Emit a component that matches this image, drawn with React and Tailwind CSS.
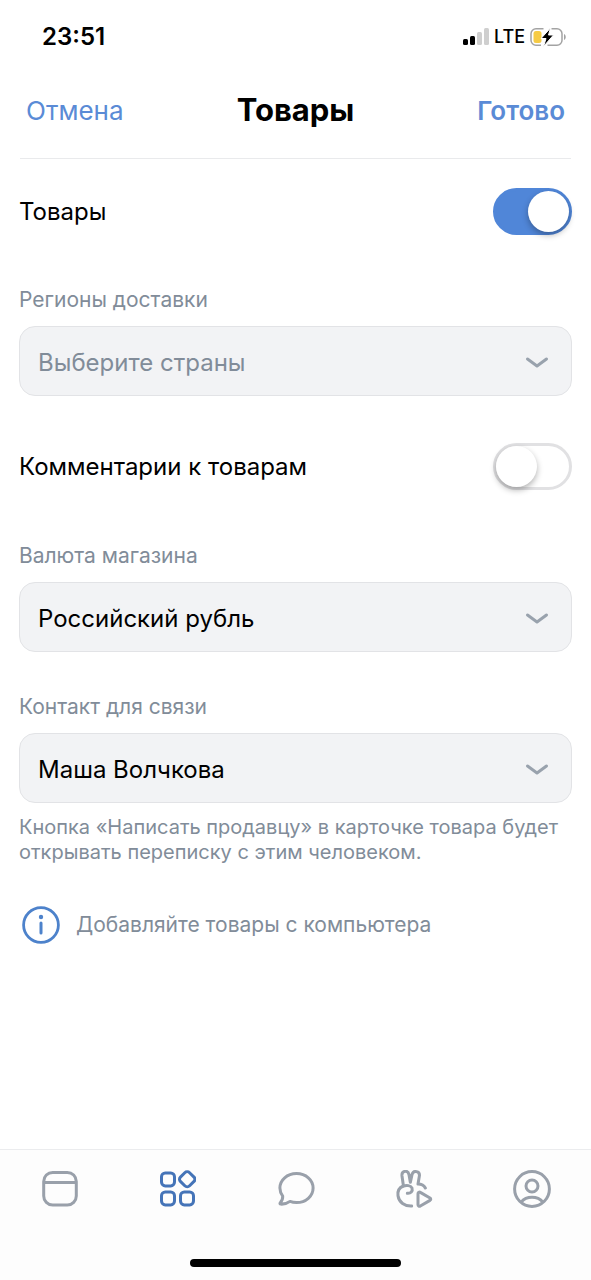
import { useState } from 'react';

const tabs = [
  { id: 'feed', label: 'Новости', Icon: FeedIcon },
  { id: 'services', label: 'Сервисы', Icon: ServicesIcon },
  { id: 'messages', label: 'Сообщения', Icon: MessagesIcon },
  { id: 'clips', label: 'Клипы', Icon: ClipsIcon },
  { id: 'profile', label: 'Профиль', Icon: ProfileIcon },
];

function FeedIcon() {
  return (
    <svg width="38" height="38" viewBox="0 0 38 38" fill="none" stroke="currentColor" strokeWidth="3">
      <rect x="3.7" y="2.4" width="32.6" height="32.6" rx="9" />
      <path d="M3.7 12.6h32.6" />
    </svg>
  );
}

function ServicesIcon() {
  return (
    <svg width="38" height="38" viewBox="-1 0 38 38" fill="none" stroke="currentColor" strokeWidth="3">
      <rect x="2.5" y="2.9" width="13" height="13" rx="3.8" />
      <rect x="2.5" y="21.9" width="13" height="13" rx="3.8" />
      <rect x="21.5" y="21.9" width="13" height="13" rx="3.8" />
      <path d="M25.8 2.7a3.4 3.4 0 0 1 4.800 0l4.400 4.400a3 3 0 0 1 0 4.300l-4.400 4.400a3.400 3.400 0 0 1-4.800 0l-4.400-4.400a3 3 0 0 1 0-4.300z" />
    </svg>
  );
}

function MessagesIcon() {
  return (
    <svg width="38" height="38" viewBox="0 0 38 38" fill="none" stroke="currentColor" strokeWidth="3" strokeLinejoin="round">
      <path d="M19.5 3.6c9.4 0 16.6 6.3 16.6 14.4s-7.2 14.6-16.6 14.6c-2.3 0-4.5-.4-6.5-1.2-2.4 1.8-5.6 2.9-9.3 2.7-.7 0-1-.8-.5-1.3 1.8-1.9 2.7-4.2 2.5-6.7A13.5 13.5 0 0 1 2.9 18C2.9 9.9 10.1 3.6 19.5 3.6z" />
    </svg>
  );
}

function ClipsIcon() {
  return (
    <svg width="38" height="38" viewBox="32 42 114 114" fill="none" stroke="currentColor" strokeWidth="9" strokeLinecap="round" strokeLinejoin="round">
      <path d="M57 88 53 60c-2-17 18-19 21-4l4 23 5-23c4-15 25-11 22 5l-4 23c11 0 18 4 22 12" />
      <path d="M57 90c-12 5-18 15-16 29 3 20 20 32 41 31" />
      <path d="M57 90c9-3 23-2 26 6 3 10-4 17-14 16" />
      <path d="M101 113v33c0 4 4 6 7 4l29-17c3-2 3-5 0-7l-29-17c-3-2-7 0-7 4z" />
    </svg>
  );
}

function ProfileIcon() {
  return (
    <svg width="38" height="38" viewBox="0 0 38 38" fill="none" stroke="currentColor" strokeWidth="3">
      <circle cx="19" cy="19" r="17.4" />
      <circle cx="19" cy="16" r="6" />
      <path d="M8 32.2c2.8-3.3 6.5-4.900 11-4.900s8.200 1.600 11 4.900" />
    </svg>
  );
}

function StatusBar() {
  return (
    <div className="flex h-[74px] items-center justify-between pr-[22px] pl-[42px]">
      <span className="text-2xl font-semibold">23:51</span>
      <div className="flex items-center gap-1">
        <svg width="28" height="20" viewBox="0 0 28 20">
          <rect x="1" y="12" width="5" height="6" rx="1.5" />
          <rect x="8" y="9" width="5" height="9" rx="1.5" />
          <rect x="15" y="5" width="5" height="13" rx="1.5" fill="#cfcfcf" />
          <rect x="22" y="1" width="5" height="17" rx="1.5" fill="#cfcfcf" />
        </svg>
        <span className="text-lg font-medium">LTE</span>
        <svg width="40" height="20" viewBox="1.5 0 40 20">
          <path d="M16 1.7H8.500a5 5 0 0 0-5 5v6.600a5 5 0 0 0 5 5h5M24 1.700h5.500a5 5 0 0 1 5 5v6.600a5 5 0 0 1-5 5H20" fill="none" stroke="#a3a3a3" strokeWidth="1.500" />
          <path d="M36.500 7c2.300 1 2.300 5 0 6z" fill="#a3a3a3" />
          <rect x="6" y="4" width="8" height="12" rx="2.500" fill="#f6cb45" />
          <path d="M23 1 13.500 11.500h5l-2.500 8 10-11.500h-5z" stroke="#fff" strokeWidth="1" />
        </svg>
      </div>
    </div>
  );
}

function Toggle({ id, label, checked, onChange }) {
  return (
    <div className="flex items-center justify-between">
      <label htmlFor={id} className="text-2xl">{label}</label>
      <input
        id={id}
        type="checkbox"
        checked={checked}
        onChange={(e) => onChange(e.target.checked)}
        className="flex h-[47px] w-[79px] cursor-pointer appearance-none items-center rounded-full border-[3px] border-[#e1e1e3] bg-white before:h-[41px] before:w-[41px] before:rounded-full before:bg-white before:shadow-[0_3px_6px_rgba(0,0,0,0.3)] before:content-[''] checked:justify-end checked:border-[#5086d8] checked:bg-[#5086d8]"
      />
    </div>
  );
}

function SelectField({ id, label, placeholder, options, hint }) {
  const [value, setValue] = useState(placeholder ? '' : options[0]);

  return (
    <div>
      <label htmlFor={id} className="block text-[21px] leading-[26px] text-[#818c99]">{label}</label>
      <div className="relative mt-[13px]">
        <select
          id={id}
          value={value}
          onChange={(e) => setValue(e.target.value)}
          className={`block h-[70px] w-full appearance-none rounded-2xl border border-[#e2e3e6] bg-[#f2f3f5] pt-[3px] pr-16 pl-[18px] text-2xl ${value ? 'text-black' : 'text-[#818c99]'}`}
        >
          {placeholder && <option value="">{placeholder}</option>}
          {options.map((o) => <option key={o}>{o}</option>)}
        </select>
        <svg className="pointer-events-none absolute top-7 right-[22px]" width="26" height="16" viewBox="0 0 26 16" fill="none" stroke="#99a2ad" strokeWidth="3" strokeLinecap="round" strokeLinejoin="round">
          <path d="m3.500 5 9.500 7 9.500-7" />
        </svg>
      </div>
      {hint && <p className="mt-3 text-xl leading-[25px] text-[#818c99]">{hint}</p>}
    </div>
  );
}

export default function App() {
  const [goods, setGoods] = useState(true);
  const [comments, setComments] = useState(false);
  const [tab, setTab] = useState('services');

  return (
    <div className="flex min-h-screen flex-col bg-white font-[Inter,sans-serif] text-black">
      <StatusBar />
      <header className="mx-5 flex h-[85px] items-center justify-between border-b border-[#e9eaec] px-[6px] pb-3">
        <button type="button" className="flex-1 text-left text-[26px] text-[#5a8bd6]">Отмена</button>
        <h1 className="text-[31px] font-bold">Товары</h1>
        <button type="button" className="flex-1 text-right text-[26px] font-semibold text-[#5a8bd6]">Готово</button>
      </header>

      <main className="flex flex-1 flex-col px-[19px] pt-[29px]">
        <Toggle id="goods" label="Товары" checked={goods} onChange={setGoods} />
        <div className="mt-[52px]">
          <SelectField id="regions" label="Регионы доставки" placeholder="Выберите страны" options={['Россия', 'Беларусь', 'Казахстан']} />
        </div>
        <div className="mt-[47px]">
          <Toggle id="comments" label="Комментарии к товарам" checked={comments} onChange={setComments} />
        </div>
        <div className="mt-[53px] flex flex-col gap-[42px]">
          <SelectField id="currency" label="Валюта магазина" options={['Российский рубль', 'Доллар США', 'Евро']} />
          <SelectField
            id="contact"
            label="Контакт для связи"
            options={['Маша Волчкова']}
            hint="Кнопка «Написать продавцу» в карточке товара будет открывать переписку с этим человеком."
          />
        </div>
        <div className="mt-[41px] flex items-center gap-4 text-[#818c99]">
          <svg className="ml-[3px]" width="38" height="38" viewBox="0 0 38 38" fill="none" stroke="#4d82cb" strokeWidth="2.800" strokeLinecap="round">
            <circle cx="19" cy="19" r="17.400" />
            <path d="M19 17v10" strokeWidth="3" />
            <circle cx="19" cy="11" r="2.200" fill="#4d82cb" stroke="none" />
          </svg>
          <p className="text-[21px]">Добавляйте товары с компьютера</p>
        </div>
      </main>

      <footer className="border-t border-[#ebecee] bg-[#fdfdfd] pt-5">
        <nav className="flex">
          {tabs.map(({ id, label, Icon }) => (
            <button
              key={id}
              type="button"
              aria-label={label}
              onClick={() => setTab(id)}
              className={`flex flex-1 justify-center ${tab === id ? 'text-[#4574b8]' : 'text-[#99a0aa]'}`}
            >
              <Icon />
            </button>
          ))}
        </nav>
        <div className="mx-auto mt-[51px] mb-[13px] h-2 w-[211px] rounded-full bg-black" />
      </footer>
    </div>
  );
}
